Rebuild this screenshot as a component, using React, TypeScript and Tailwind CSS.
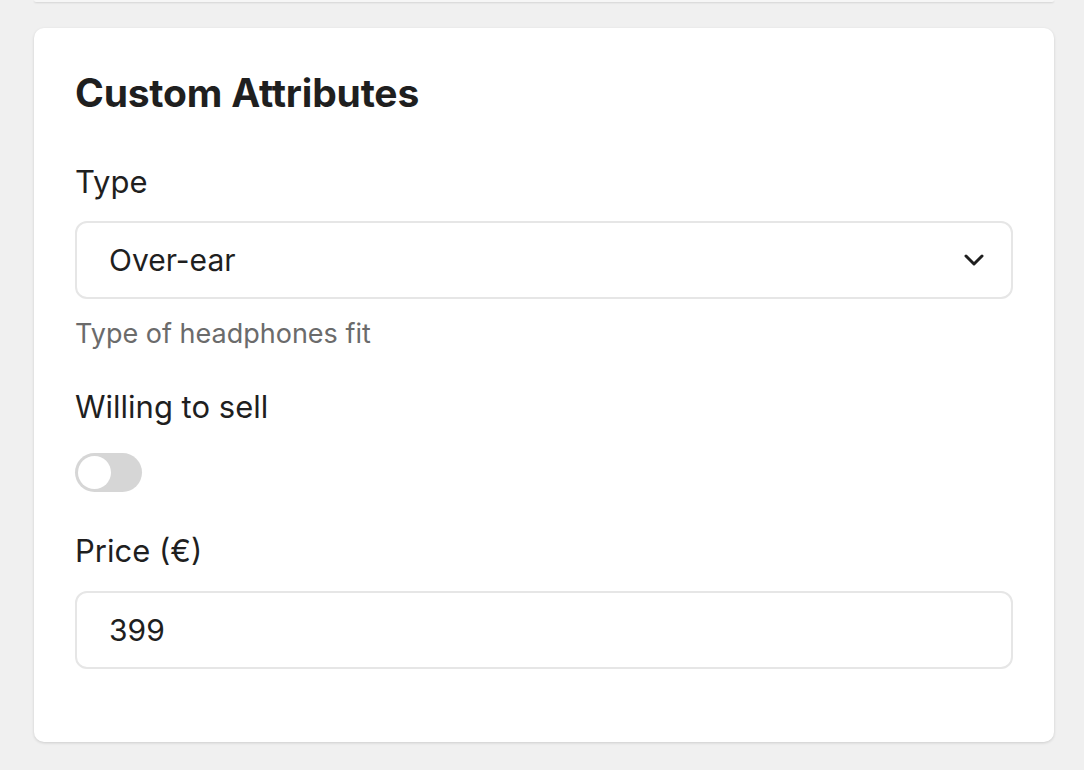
import React from "react";

const font = { fontFamily: "Inter, 'Noto Sans', sans-serif" };

const App = () => {
	return (
		<div
			className="w-[1084px] h-[770px] bg-[#f0f0f0] overflow-hidden"
			style={font}
		>
			<div className="ml-[34px] mr-[30px] h-[2px] bg-[#f6f6f6] shadow-[0_1px_2px_rgba(0,0,0,0.12)] rounded-b-[10px]" />

			<div className="ml-[34px] mr-[30px] mt-[26px] bg-white rounded-[10px] shadow-[0_1px_3px_rgba(0,0,0,0.15)] px-[41px] pt-[38px] pb-[73px]">
				<h2 className="text-[39px] leading-[54px] font-bold text-[#1f1f1f] tracking-[-0.2px]">
					Custom Attributes
				</h2>

				<label className="block mt-[41px] text-[31px] leading-[42px] text-[#1f1f1f]">
					Type
				</label>
				<div className="mt-[18px] h-[78px] border-2 border-[#e6e6e6] rounded-[12px] flex items-center justify-between pl-[32px] pr-[27px]">
					<span className="text-[30px] text-[#1f1f1f]">Over-ear</span>
					<svg width="20" height="12" viewBox="0 0 20 12" fill="none">
						<path
							d="M2 2 L10 10 L18 2"
							stroke="#1f1f1f"
							strokeWidth="3"
							strokeLinecap="round"
							strokeLinejoin="round"
						/>
					</svg>
				</div>
				<p className="mt-[17px] text-[27px] leading-[36px] text-[#6b6b6b]">
					Type of headphones fit
				</p>

				<label className="block mt-[34px] text-[31px] leading-[42px] text-[#1f1f1f]">
					Willing to sell
				</label>
				<div className="mt-[25px] w-[67px] h-[39px] rounded-full bg-[#d6d6d6] flex items-center px-[3px]">
					<div className="w-[33px] h-[33px] rounded-full bg-white" />
				</div>

				<label className="block mt-[38px] text-[31px] leading-[42px] text-[#1f1f1f]">
					Price (€)
				</label>
				<div className="mt-[19px] h-[78px] border-2 border-[#e6e6e6] rounded-[12px] flex items-center pl-[32px]">
					<span className="text-[30px] text-[#1f1f1f]">399</span>
				</div>
			</div>
		</div>
	);
};

export default App;
